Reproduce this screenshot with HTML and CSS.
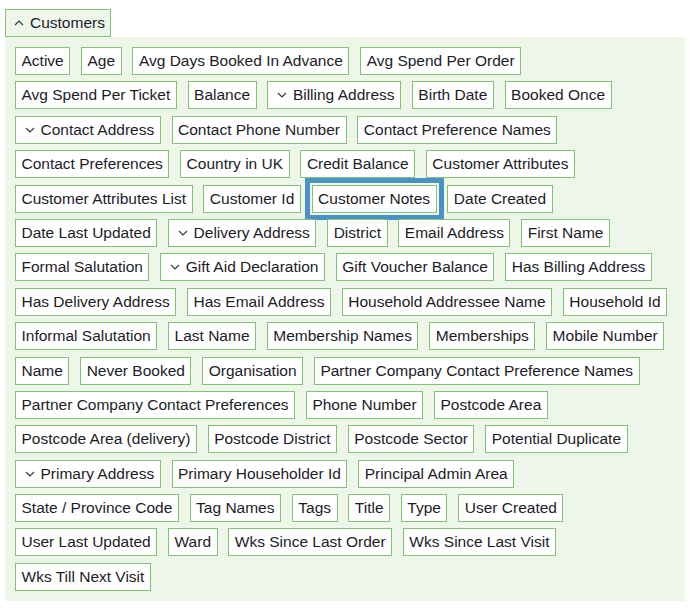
FILE: index.html
```html
<!DOCTYPE html>
<html>
<head>
<meta charset="utf-8">
<link rel="stylesheet" href="styles.css">
</head>
<body>
<div class="group">
  <div class="group-head"><svg class="chev" viewBox="0 0 10 6" width="10" height="6"><polyline points="1,5 5,1 9,5"/></svg>Customers</div>
  <div class="panel">
    <span class="tag">Active</span>
    <span class="tag">Age</span>
    <span class="tag">Avg Days Booked In Advance</span>
    <span class="tag">Avg Spend Per Order</span>
    <span class="tag">Avg Spend Per Ticket</span>
    <span class="tag">Balance</span>
    <span class="tag"><svg class="chev" viewBox="0 0 10 6" width="10" height="6"><polyline points="1,1 5,5 9,1"/></svg>Billing Address</span>
    <span class="tag">Birth Date</span>
    <span class="tag">Booked Once</span>
    <span class="tag"><svg class="chev" viewBox="0 0 10 6" width="10" height="6"><polyline points="1,1 5,5 9,1"/></svg>Contact Address</span>
    <span class="tag">Contact Phone Number</span>
    <span class="tag">Contact Preference Names</span>
    <span class="tag">Contact Preferences</span>
    <span class="tag">Country in UK</span>
    <span class="tag">Credit Balance</span>
    <span class="tag">Customer Attributes</span>
    <span class="tag">Customer Attributes List</span>
    <span class="tag">Customer Id</span>
    <span class="tag selected">Customer Notes</span>
    <span class="tag">Date Created</span>
    <span class="tag">Date Last Updated</span>
    <span class="tag"><svg class="chev" viewBox="0 0 10 6" width="10" height="6"><polyline points="1,1 5,5 9,1"/></svg>Delivery Address</span>
    <span class="tag">District</span>
    <span class="tag">Email Address</span>
    <span class="tag">First Name</span>
    <span class="tag">Formal Salutation</span>
    <span class="tag"><svg class="chev" viewBox="0 0 10 6" width="10" height="6"><polyline points="1,1 5,5 9,1"/></svg>Gift Aid Declaration</span>
    <span class="tag">Gift Voucher Balance</span>
    <span class="tag">Has Billing Address</span>
    <span class="tag">Has Delivery Address</span>
    <span class="tag">Has Email Address</span>
    <span class="tag">Household Addressee Name</span>
    <span class="tag">Household Id</span>
    <span class="tag">Informal Salutation</span>
    <span class="tag">Last Name</span>
    <span class="tag">Membership Names</span>
    <span class="tag">Memberships</span>
    <span class="tag">Mobile Number</span>
    <span class="tag">Name</span>
    <span class="tag">Never Booked</span>
    <span class="tag">Organisation</span>
    <span class="tag">Partner Company Contact Preference Names</span>
    <span class="tag">Partner Company Contact Preferences</span>
    <span class="tag">Phone Number</span>
    <span class="tag">Postcode Area</span>
    <span class="tag">Postcode Area (delivery)</span>
    <span class="tag">Postcode District</span>
    <span class="tag">Postcode Sector</span>
    <span class="tag">Potential Duplicate</span>
    <span class="tag"><svg class="chev" viewBox="0 0 10 6" width="10" height="6"><polyline points="1,1 5,5 9,1"/></svg>Primary Address</span>
    <span class="tag">Primary Householder Id</span>
    <span class="tag">Principal Admin Area</span>
    <span class="tag">State / Province Code</span>
    <span class="tag">Tag Names</span>
    <span class="tag">Tags</span>
    <span class="tag">Title</span>
    <span class="tag">Type</span>
    <span class="tag">User Created</span>
    <span class="tag">User Last Updated</span>
    <span class="tag">Ward</span>
    <span class="tag">Wks Since Last Order</span>
    <span class="tag">Wks Since Last Visit</span>
    <span class="tag">Wks Till Next Visit</span>
  </div>
</div>
</body>
</html>
```

FILE: styles.css
```css
html, body {
  margin: 0;
  padding: 0;
  background: #ffffff;
}
body {
  font-family: "Liberation Sans", Arial, sans-serif;
  font-size: 15.5px;
  color: #1c1c28;
}
.group {
  padding: 9px 5px 0 5px;
  display: flex;
  flex-direction: column;
  align-items: flex-start;
}
.group-head {
  display: flex;
  align-items: center;
  gap: 6px;
  height: 26px;
  padding: 0 5px 0 8px;
  border: 1px solid #80c572;
  background: #eef6ea;
  line-height: 26px;
}
.chev {
  fill: none;
  stroke: #3a3a3a;
  stroke-width: 1.2;
  flex: none;
}
.panel {
  align-self: stretch;
  background: #eef6ea;
  padding: 10px;
  display: flex;
  flex-wrap: wrap;
  column-gap: 10.8px;
  row-gap: 6.4px;
}
.tag {
  display: flex;
  align-items: center;
  gap: 5px;
  height: 26px;
  padding: 0 5.5px;
  border: 1px solid #80c572;
  background: #ffffff;
  line-height: 26px;
  white-space: nowrap;
}
.tag .chev {
  margin-left: 3px;
  margin-right: 1px;
}
.selected {
  outline: 5px solid #4a92c6;
  outline-offset: 2px;
}
```
